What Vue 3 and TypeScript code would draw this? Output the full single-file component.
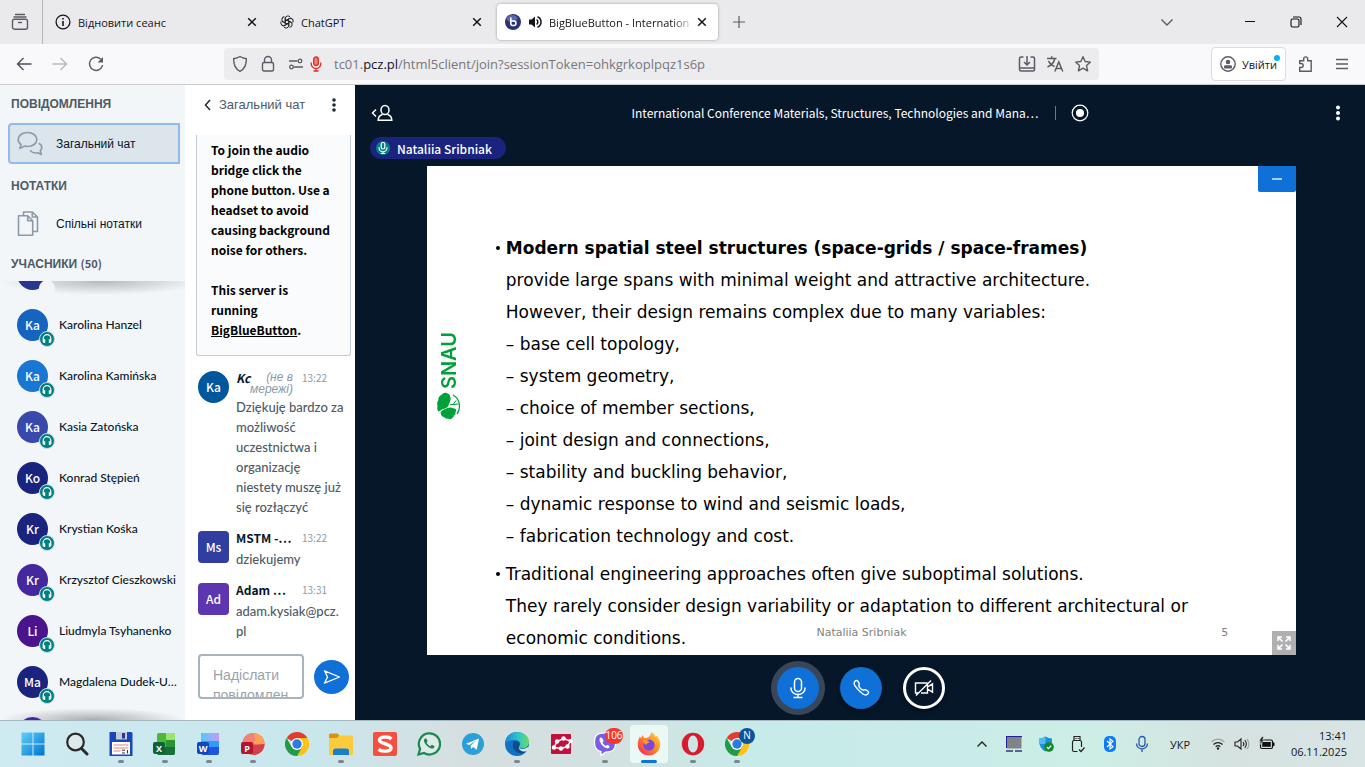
<script setup lang="ts">
interface Participant {
  initials: string
  name: string
  tone: string
}

const participants: Participant[] = [
  { initials: '', name: '', tone: 'navy' },
  { initials: 'Ka', name: 'Karolina Hanzel', tone: 'azure' },
  { initials: 'Ka', name: 'Karolina Kamińska', tone: 'sky' },
  { initials: 'Ka', name: 'Kasia Zatońska', tone: 'indigo' },
  { initials: 'Ko', name: 'Konrad Stępień', tone: 'deep' },
  { initials: 'Kr', name: 'Krystian Kośka', tone: 'deep' },
  { initials: 'Kr', name: 'Krzysztof Cieszkowski', tone: 'violet' },
  { initials: 'Li', name: 'Liudmyla Tsyhanenko', tone: 'purple' },
  { initials: 'Ma', name: 'Magdalena Dudek-U…', tone: 'deep' },
  { initials: '', name: '', tone: 'violet' },
]

const variables: string[] = [
  'base cell topology,',
  'system geometry,',
  'choice of member sections,',
  'joint design and connections,',
  'stability and buckling behavior,',
  'dynamic response to wind and seismic loads,',
  'fabrication technology and cost.',
]
</script>

<template>
  <div class="desktop">
    <header class="tabbar">
      <button class="icon-btn recent" aria-label="Recent">
        <svg width="18" height="18" viewBox="0 0 18 18" fill="none" stroke="#5b5b66" stroke-width="1.4"><path d="M4 1.5h10M2.5 4h13" /><rect x="1.5" y="6.2" width="15" height="10" rx="2" /><path d="M7 9.5h4" /></svg>
      </button>
      <div class="tab">
        <svg class="fav" width="16" height="16" viewBox="0 0 16 16" fill="none" stroke="#15141a" stroke-width="1.3"><circle cx="8" cy="8" r="6.9" /><path d="M8 7v5M8 4v1.4" stroke-width="1.6" /></svg>
        <span class="tab-title">Відновити сеанс</span>
        <button class="icon-btn close" aria-label="Close"><svg width="10" height="10" viewBox="0 0 10 10" stroke="#15141a" stroke-width="1.5"><path d="M1.2 1.2l7.6 7.6M8.8 1.2L1.2 8.8" /></svg></button>
      </div>
      <div class="tab">
        <svg class="fav" width="14" height="14" viewBox="0 0 24 24" fill="none" stroke="#222" stroke-width="1.7">
          <path v-for="a in [0, 60, 120, 180, 240, 300]" :key="a" :transform="`rotate(${a} 12 12)`" d="M9 13.7V6.200a4.600 4.600 0 0 1 8.600-2.300M9 10.200l6.300-3.700a4.600 4.600 0 0 1 2.300-.6" />
        </svg>
        <span class="tab-title">ChatGPT</span>
        <button class="icon-btn close" aria-label="Close"><svg width="10" height="10" viewBox="0 0 10 10" stroke="#15141a" stroke-width="1.5"><path d="M1.2 1.2l7.6 7.6M8.8 1.2L1.2 8.8" /></svg></button>
      </div>
      <div class="tab active">
        <svg class="fav" width="16" height="16" viewBox="0 0 16 16"><circle cx="8" cy="8" r="8" fill="#283274" /><ellipse cx="7" cy="4.5" rx="5.5" ry="3.6" fill="#5c68aa" /><path d="M5.8 3.5v6a2 2 0 0 0 2 2h1.1a2 2 0 0 0 2-2V9a2 2 0 0 0-2-2H6.5" fill="none" stroke="#fff" stroke-width="1.6" /></svg>
        <svg class="sound" width="14" height="14" viewBox="0 0 14 14" fill="#15141a"><path d="M1 4.5h2.5L7 1.5v11L3.500 9.500H1z" /><path d="M8.600 4.500a3.200 3.200 0 0 1 0 5M9.500 1.800a5.600 5.600 0 0 1 0 10.400" fill="none" stroke="#15141a" stroke-width="1.500" /></svg>
        <span class="tab-title fade">BigBlueButton - Internation</span>
        <button class="icon-btn close" aria-label="Close"><svg width="10" height="10" viewBox="0 0 10 10" stroke="#15141a" stroke-width="1.5"><path d="M1.2 1.2l7.6 7.6M8.8 1.2L1.2 8.8" /></svg></button>
      </div>
      <button class="icon-btn plus" aria-label="New tab"><svg width="12" height="12" viewBox="0 0 12 12" stroke="#5b5b66" stroke-width="1.2"><path d="M6 0v12M0 6h12" /></svg></button>
      <div class="grow"></div>
      <button class="icon-btn all-tabs" aria-label="All tabs"><svg width="14" height="14" viewBox="0 0 14 14" fill="none" stroke="#5b5b66" stroke-width="1.4"><path d="M1.500 4.500L7 10l5.500-5.500" /></svg></button>
      <button class="icon-btn win" aria-label="Minimise"><svg width="12" height="12" viewBox="0 0 12 12" stroke="#111"><path d="M1 5.500h10" /></svg></button>
      <button class="icon-btn win" aria-label="Restore"><svg width="12" height="12" viewBox="0 0 12 12" fill="none" stroke="#111" stroke-width="1.1"><rect x="1" y="3" width="8" height="8" rx="1.500" /><path d="M3 1h6a2 2 0 0 1 2 2v6" /></svg></button>
      <button class="icon-btn win" aria-label="Close window"><svg width="12" height="12" viewBox="0 0 12 12" stroke="#111" stroke-width="1.1"><path d="M1 1l10 10M11 1L1 11" /></svg></button>
    </header>

    <nav class="navbar">
      <button class="icon-btn nav" aria-label="Back"><svg width="16" height="16" viewBox="0 0 16 16" fill="none" stroke="#4f4f5a" stroke-width="1.400"><path d="M15.500 8H1.500M7.500 2L1.500 8l6 6" /></svg></button>
      <button class="icon-btn nav" aria-label="Forward"><svg width="16" height="16" viewBox="0 0 16 16" fill="none" stroke="#b9b9bf" stroke-width="1.400"><path d="M.5 8h14M8.500 2l6 6-6 6" /></svg></button>
      <button class="icon-btn nav" aria-label="Reload"><svg width="16" height="16" viewBox="0 0 16 16" fill="none" stroke="#5b5b66" stroke-width="1.400"><path d="M12.800 3.200A6.600 6.600 0 1 0 14.600 9" /><path d="M15 1v5.500H9.500z" fill="#5b5b66" stroke="none" /></svg></button>
      <div class="urlbar">
        <svg width="16" height="18" viewBox="0 0 16 18" fill="none" stroke="#5b5b66" stroke-width="1.400"><path d="M8 1.500c2 1.300 4 1.900 6.300 2.200C14.500 9.500 12.500 14 8 16.300 3.500 14 1.500 9.500 1.700 3.700 4 3.400 6 2.800 8 1.500z" /></svg>
        <svg class="lock" width="14" height="18" viewBox="0 0 14 18" fill="none" stroke="#5b5b66" stroke-width="1.400"><rect x="1.500" y="7.500" width="11" height="8.500" rx="1.500" /><path d="M3.500 7.500V5a3.500 3.500 0 0 1 7 0v2.500" /></svg>
        <svg class="perm" width="16" height="14" viewBox="0 0 16 14" fill="none" stroke="#5b5b66" stroke-width="1.300"><circle cx="12" cy="4" r="1.800" /><path d="M1 4h8.500M6 10h9" /><circle cx="3.500" cy="10" r="1.800" /></svg>
        <svg class="rec" width="12" height="16" viewBox="0 0 12 16" fill="none" stroke="#e22d20" stroke-width="1.300"><rect x="3.700" y="1" width="4.600" height="8.500" rx="2.300" fill="#f0807a" /><path d="M1.200 6.500v1.200a4.800 4.800 0 0 0 9.600 0V6.500M6 12.500V15M3.500 15h5" /></svg>
        <span class="url">tc01.<b>pcz.pl</b>/html5client/join?sessionToken=ohkgrkoplpqz1s6p</span>
        <button class="icon-btn tool" aria-label="Install"><svg width="18" height="18" viewBox="0 0 18 18" fill="none" stroke="#5b5b66" stroke-width="1.500"><path d="M5.500 2H3a1.500 1.500 0 0 0-1.500 1.500v11A1.500 1.500 0 0 0 3 16h12a1.500 1.500 0 0 0 1.500-1.500v-11A1.500 1.500 0 0 0 15 2h-2.500M1.500 13h15M9 1v8.500M6 7l3 3 3-3" /></svg></button>
        <button class="icon-btn tool" aria-label="Translate"><svg width="18" height="18" viewBox="0 0 18 18" fill="none" stroke="#5b5b66" stroke-width="1.500"><path d="M1 3.500h9.500M5.700 1.300v2.200M2.500 6c1 2.500 3.500 4.500 6 5.500M8.800 3.500C8 7.500 5 10.500 1.500 12M8.800 16.500L12.800 7l4 9.500M10.200 13.500h5.200" /></svg></button>
        <button class="icon-btn tool" aria-label="Bookmark"><svg width="18" height="18" viewBox="0 0 18 18" fill="none" stroke="#5b5b66" stroke-width="1.400" stroke-linejoin="round"><path d="M9 1.700l2.200 4.800 5.200.6-3.900 3.500 1.100 5.200L9 13.200l-4.600 2.600 1.100-5.200L1.600 7.100l5.200-.6z" /></svg></button>
      </div>
      <button class="signin">
        <svg width="16" height="16" viewBox="0 0 16 16"><circle cx="8" cy="8" r="7.200" fill="none" stroke="#5b5b66" stroke-width="1.400" /><circle cx="8" cy="6" r="2.300" fill="#5b5b66" /><rect x="3.800" y="9.300" width="8.400" height="3.200" rx="1.600" fill="#5b5b66" /></svg>
        <span>Увійти</span>
        <i class="dot"></i>
      </button>
      <button class="icon-btn ext" aria-label="Extensions"><svg width="16" height="18" viewBox="0 0 16 18" fill="none" stroke="#5b5b66" stroke-width="1.400"><path d="M1.700 16.300V12.500h1.500a2 2 0 0 0 0-4H1.700V5.700h4V3.900a2 2 0 0 1 4 0v1.800h3.500v10.600z" /></svg></button>
      <button class="icon-btn menu" aria-label="Menu"><svg width="12" height="12" viewBox="0 0 12 12" stroke="#5b5b66" stroke-width="1.300"><path d="M0 1.500h12M0 6h12M0 10.500h12" /></svg></button>
    </nav>

    <main class="app">
      <aside class="sidebar">
        <h2>ПОВІДОМЛЕННЯ</h2>
        <button class="side-item selected">
          <svg width="26" height="26" viewBox="0 0 26 26" fill="none" stroke="#8b9aa8" stroke-width="1.600" stroke-linejoin="round"><path d="M10.500 1.500c5.300 0 9.300 3 9.300 7s-4 7-9.300 7c-1 0-2-.1-2.900-.4L3 17.300l1-3.800c-1.700-1.200-2.800-3-2.800-5 0-4 4-7 9.300-7z" /><path d="M21.700 12.200c1.900.9 3.100 2.400 3.100 4.200 0 1.200-.6 2.300-1.500 3.200l1 3.900-3.300-1.800c-.7.200-1.400.3-2.200.3-2.500 0-4.700-1.200-5.500-3" /></svg>
          <span>Загальний чат</span>
        </button>
        <h2 class="notes">НОТАТКИ</h2>
        <button class="side-item note-item">
          <svg width="26" height="26" viewBox="0 0 26 26" fill="none" stroke="#8b9aa8" stroke-width="1.600" stroke-linejoin="round"><path d="M1.500 4.800h9.200l5 5v14.500H1.500zM10.700 4.800v5h5" /><path d="M6.500 4.500V1h8.800l5.200 5v14.500h-4.500M15.300 1v5h5.200" /></svg>
          <span>Спільні нотатки</span>
        </button>
        <h2 class="users-title">УЧАСНИКИ <span>(50)</span></h2>
        <div class="users">
          <ul>
            <li v-for="(p, i) in participants" :key="i">
              <span class="avatar" :class="p.tone">{{ p.initials }}
                <span class="phones" :class="{ blank: !p.name }"><svg v-if="p.name" width="16" height="16" viewBox="0 0 16 16" fill="none" stroke="#fff"><path d="M4.200 11V7.500a3.800 3.800 0 0 1 7.600 0V11" stroke-width="1.200" /><path d="M5.300 8.300v3.600M10.700 8.300v3.600" stroke-width="1.800" /></svg></span>
              </span>
              <span class="person">{{ p.name }}</span>
            </li>
          </ul>
        </div>
      </aside>

      <section class="chat">
        <header class="chat-head">
          <button class="icon-btn back" aria-label="Hide chat"><svg width="8" height="12" viewBox="0 0 8 12" fill="none" stroke="#1b2a3a" stroke-width="1.500"><path d="M6 1L1.500 6 6 11" /></svg></button>
          <h3>Загальний чат</h3>
          <button class="icon-btn dots" aria-label="Chat options"><svg width="6" height="14" viewBox="0 0 6 14" fill="#1b2a3a"><circle cx="3" cy="2" r="1.800" /><circle cx="3" cy="7" r="1.800" /><circle cx="3" cy="12" r="1.800" /></svg></button>
        </header>
        <div class="log">
          <div class="welcome">
            <p>To join the audio bridge click the phone button. Use a headset to avoid causing background noise for others.</p>
            <p>This server is running <a href="#">BigBlueButton</a>.</p>
          </div>
          <article class="msg">
            <span class="avatar ocean">Ka</span>
            <div class="msg-main">
              <div class="msg-head"><strong class="gone">Kc</strong><em>(не в мережі)</em><time>13:22</time></div>
              <p>Dziękuję bardzo za możliwość uczestnictwa i organizację niestety muszę już się rozłączyć</p>
            </div>
          </article>
          <article class="msg">
            <span class="avatar square royal">Ms</span>
            <div class="msg-main">
              <div class="msg-head"><strong>MSTM -…</strong><time>13:22</time></div>
              <p>dziekujemy</p>
            </div>
          </article>
          <article class="msg">
            <span class="avatar square plum">Ad</span>
            <div class="msg-main">
              <div class="msg-head"><strong>Adam …</strong><time>13:31</time></div>
              <p>adam.kysiak@pcz.<wbr>pl</p>
            </div>
          </article>
        </div>
        <form class="composer" @submit.prevent>
          <textarea aria-label="Повідомлення" placeholder="Надіслати повідомлення"></textarea>
          <button class="send" aria-label="Send"><svg width="18" height="16" viewBox="0 0 18 16" fill="none" stroke="#fff" stroke-width="1.300" stroke-linejoin="round"><path d="M1.500 1.800L16.500 8l-15 6.200L4.500 8z" /></svg></button>
        </form>
      </section>

      <section class="stage">
        <header class="stage-head">
          <button class="icon-btn toggle" aria-label="Toggle users"><svg width="22" height="18" viewBox="0 0 22 18" fill="none" stroke="#fff" stroke-width="1.500"><path d="M5 5.500L1.500 9 5 12.500" /><ellipse cx="14" cy="6" rx="4" ry="4.600" /><path d="M11.500 10.500c-2.700.8-4.300 2.500-4.300 5.700h13.600c0-3.200-1.600-4.900-4.300-5.700" /></svg></button>
          <div class="room">
            <h1>International Conference Materials, Structures, Technologies and Mana…</h1>
            <i class="sep"></i>
            <svg width="18" height="18" viewBox="0 0 18 18"><circle cx="9" cy="9" r="7.800" fill="none" stroke="#fff" stroke-width="1.200" /><circle cx="9" cy="9" r="4" fill="#fff" /></svg>
          </div>
          <button class="icon-btn options" aria-label="Options"><svg width="6" height="16" viewBox="0 0 6 16" fill="#fff"><circle cx="3" cy="2.500" r="2" /><circle cx="3" cy="8" r="2" /><circle cx="3" cy="13.500" r="2" /></svg></button>
        </header>
        <div class="talkers">
          <button class="talker">
            <svg width="14" height="14" viewBox="0 0 14 14" fill="none" stroke="#fff" stroke-width="1.200"><circle cx="7" cy="7" r="7" fill="#008081" stroke="none" /><rect x="5.200" y="1.500" width="3.600" height="6.500" rx="1.800" /><path d="M3 6.200v.6a4 4 0 0 0 8 0v-.6M7 10.500V12.500M4.800 12.500h4.400" /></svg>
            <span>Nataliia Sribniak</span>
          </button>
        </div>
        <div class="screen">
          <div class="slide">
            <div class="brand">
              <svg width="24" height="28" viewBox="0 0 24 28" fill="#00a13a"><path d="M11 14.500L9.500 15.800C7.500 17.300 5.500 16.500 4 18.200L1.500 19.500C-.3 17.500.3 15.500.6 14 -.3 12 .3 9.500 1.300 8.500 1 5.500 3 3.500 4.500 3 6 .8 8.500.2 10 1.200c2 .2 3.200 1.800 3.200 3.600 1 1.800.3 4.200-.7 6.200z" /><path d="M10.500 16l3.500-.5 4.800 1.500c.6 1.600.2 2.500-.4 3.200.6 1.800-.3 3-1.600 3.300.2 1.700-.8 2.300-1.800 2.500-.5 1.500-2.500 1.500-3.500.8C9 27 8 26 7.300 25.300 5 25 4 23 3.800 21.500c-.6-1 0-2 .9-2.300C6 17.300 8.500 17.500 10.500 16z" /><path d="M16 3c3.500 2 6.500 6 6.500 11.500 0 3-.8 5.500-2.500 7.500" fill="none" stroke="#00a13a" stroke-width="1.300" /><path d="M13 12.800l8.500-.8M16 12.500l3-4" fill="none" stroke="#00a13a" /></svg>
              <span>SNAU</span>
            </div>
            <ul class="points">
              <li>
                <strong>Modern spatial steel structures (space-grids / space-frames)</strong><br>
                provide large spans with minimal weight and attractive architecture.<br>
                However, their design remains complex due to many variables:<br>
                <template v-for="v in variables" :key="v">– {{ v }}<br></template>
              </li>
              <li>
                Traditional engineering approaches often give suboptimal solutions.<br>
                They rarely consider design variability or adaptation to different architectural or<br>
                economic conditions.
              </li>
            </ul>
            <span class="author">Nataliia Sribniak</span>
            <span class="page">5</span>
            <button class="shrink" aria-label="Minimise presentation"><svg width="10" height="2" viewBox="0 0 10 2"><path d="M0 1h10" stroke="#fff" stroke-width="1.300" /></svg></button>
            <button class="full" aria-label="Fullscreen"><svg width="16" height="16" viewBox="0 0 16 16" fill="none" stroke="#fff" stroke-width="1.600"><path d="M2 6V2h4M2 2l4.500 4.500M10 2h4v4M14 2L9.500 6.500M2 10v4h4M2 14l4.500-4.500M14 10v4h-4M14 14L9.500 9.500" /></svg></button>
          </div>
        </div>
        <footer class="actions">
          <button class="round mic" aria-label="Mute"><svg width="18" height="22" viewBox="0 0 18 22" fill="none" stroke="#fff" stroke-width="1.500"><rect x="5.500" y="1.500" width="7" height="13" rx="3.500" /><path d="M2 10.500v1a7 6 0 0 0 14 0v-1M9 17.500v2.800M4.500 20.500h9" /></svg></button>
          <button class="round" aria-label="Leave audio"><svg width="18" height="18" viewBox="0 0 18 18" fill="none" stroke="#fff" stroke-width="1.400" stroke-linejoin="round"><path d="M2.300 3.200C3.200 1.300 5 .9 6 2.300l1.200 2c.5 1-.6 1.800-.4 2.600.7 2.100 2.300 3.700 4.300 4.300.8.200 1.600-.9 2.600-.4l2 1.200c1.400 1 1 2.800-.9 3.700-1 .5-2.600.2-3.800-.7C7.500 12.400 4.800 9.600 3 6.900 2.200 5.700 1.900 4.200 2.300 3.200z" /></svg></button>
          <button class="round cam" aria-label="Share webcam"><svg width="20" height="18" viewBox="0 0 20 18" fill="none" stroke="#fff" stroke-width="1.400"><path d="M13.500 4H1.500v10H4M7 14h6.500V4.500M13.500 8l5-3.200v8.400l-5-3.200M2 16.500L17 1.500" /></svg></button>
        </footer>
      </section>
    </main>

    <footer class="taskbar">
      <div class="apps">
        <button aria-label="Start"><svg width="24" height="24" viewBox="0 0 24 24"><defs><linearGradient id="win" x1="0" y1="0" x2="1" y2="1"><stop offset="0" stop-color="#5fd0f8" /><stop offset="1" stop-color="#0072d0" /></linearGradient></defs><path d="M.5.5h11v11H.5zM12.500.5h11v11h-11zM.5 12.500h11v11H.5zM12.500 12.500h11v11h-11z" fill="url(#win)" /></svg></button>
        <button aria-label="Search"><svg width="24" height="24" viewBox="0 0 24 24" fill="none" stroke="#2b2b2b"><circle cx="10.500" cy="10" r="8.300" stroke-width="2.200" fill="#dfe9ec" /><path d="M16.500 16.500l5.500 5.500" stroke-width="3" stroke-linecap="round" /></svg></button>
        <button class="open" aria-label="Total Commander"><svg width="24" height="24" viewBox="0 0 24 24"><path d="M.5 0h22l1 1v23h-23z" fill="#1847b8" /><path d="M7 0h11v7.500H7z" fill="#c4cbd6" /><path d="M13 1h3v5.500h-3z" fill="#1d3b94" /><path d="M3 10h18v12.500H3z" fill="#fff" /><path d="M4.500 13h15M4.500 16h15M4.500 19h7" stroke="#e08484" stroke-width="1.200" /><path d="M13 18.200h3M13 21h3M18.500 18v3.500" stroke="#333" /></svg></button>
        <button class="open" aria-label="Excel"><svg width="24" height="24" viewBox="0 0 24 24"><rect x="4" y="1" width="18" height="22" rx="2" fill="#4eb83a" /><path d="M13 1h7a2 2 0 0 1 2 2v5h-9z" fill="#9be36d" /><path d="M13 8h9v7h-9z" fill="#2c9438" /><path d="M4 15h18v6a2 2 0 0 1-2 2H6a2 2 0 0 1-2-2z" fill="#17703a" /><rect y="10" width="12" height="12" rx="2" fill="#0e6238" /><text x="6" y="19.500" text-anchor="middle" class="glyph">X</text></svg></button>
        <button class="open" aria-label="Word"><svg width="24" height="24" viewBox="0 0 24 24"><defs><linearGradient id="wd"><stop offset="0" stop-color="#52c9fa" /><stop offset="1" stop-color="#c39bfa" /></linearGradient></defs><rect x="4" y="1" width="18" height="22" rx="2" fill="#1d54df" /><path d="M6 1h14a2 2 0 0 1 2 2v6H4V3a2 2 0 0 1 2-2z" fill="url(#wd)" /><path d="M4 9h18v6H4z" fill="#319af6" /><rect y="10" width="12" height="12" rx="2" fill="#1147bc" /><text x="6" y="19.500" text-anchor="middle" class="glyph">W</text></svg></button>
        <button class="open" aria-label="PowerPoint"><svg width="24" height="24" viewBox="0 0 24 24"><circle cx="12.500" cy="12" r="11" fill="#e8664a" /><path d="M12.500 1a11 11 0 0 1 11 11l-8 2-6-7z" fill="#ffa154" /><path d="M12.500 1C7 1 2.500 4 1.500 10l9 3 4-5z" fill="#f28277" /><path d="M11 13l12.500-1A11 11 0 0 1 12 23z" fill="#d43f50" /><rect y="10" width="12" height="12" rx="2" fill="#b3152c" /><text x="6" y="19.500" text-anchor="middle" class="glyph">P</text></svg></button>
        <button aria-label="Chrome"><svg width="24" height="24" viewBox="0 0 24 24"><path d="M12 12L1.600 6A12 12 0 0 1 22.400 6z" fill="#e33b2e" /><path d="M12 12V6h10.400A12 12 0 0 1 12 24z" fill="#fbc116" /><path d="M12 12l5.200 3L12 24A12 12 0 0 1 1.600 6l5.200 9z" fill="#229a48" /><circle cx="12" cy="12" r="6" fill="#fff" /><circle cx="12" cy="12" r="4.700" fill="#2c7be5" /></svg></button>
        <button class="open" aria-label="Explorer"><svg width="24" height="24" viewBox="0 0 24 24"><path d="M0 3a1.500 1.500 0 0 1 1.500-1.500h7L11 4v4H0z" fill="#d9940f" /><path d="M0 6h8l2-2.500h12A2 2 0 0 1 24 5.500V22a1 1 0 0 1-1 1H1a1 1 0 0 1-1-1z" fill="#fccb3c" /><path d="M4 23v-4a2.500 2.500 0 0 1 2.500-2.500h11A2.500 2.500 0 0 1 20 19v4z" fill="#1680cf" /></svg></button>
        <button aria-label="Snagit"><svg width="24" height="24" viewBox="0 0 24 24"><rect width="24" height="24" rx="2" fill="#f5503f" /><path d="M18.500 6.800C16 4.800 6.500 3.800 6.500 8c0 4.500 11.500 3 11.500 8 0 4.500-9.500 3.500-12.500 1.300" fill="none" stroke="#fff" stroke-width="3.400" /></svg></button>
        <button aria-label="WhatsApp"><svg width="24" height="24" viewBox="0 0 24 24"><path d="M1.500 22.500l1.600-5.600A10.600 10.600 0 1 1 7 21z" fill="#dfe9e8" stroke="#1b8754" stroke-width="2.200" /><path d="M8.500 6.300c-2 .8-2.200 3.400.4 6.400 2.800 3.300 6 4.700 7.800 3.200.8-.7.900-1.700.6-2l-2.500-1.200-1.400 1.500c-1.800-.7-3-1.900-3.800-3.600l1-1.200-1-2.700z" fill="#1b8754" /></svg></button>
        <button aria-label="Telegram"><svg width="24" height="24" viewBox="0 0 24 24"><circle cx="12" cy="12" r="11" fill="#2a9fd8" /><path d="M5 11.700l13-5.200-2.200 11.200-3.700-2.700-2 2-.5-3.600 6-5-7.500 4.500z" fill="#fff" /></svg></button>
        <button class="open" aria-label="Edge"><svg width="24" height="24" viewBox="0 0 24 24"><defs><linearGradient id="eg"><stop offset="0" stop-color="#1588d8" /><stop offset=".5" stop-color="#2cc0d2" /><stop offset="1" stop-color="#67df62" /></linearGradient></defs><circle cx="12" cy="12" r="12" fill="#1271c4" /><path d="M0 11.500C.5 4.500 5.500 0 12 0c7 0 12 4.500 12 10 0 4-3 6-6.500 6-2.500 0-4-.8-3.200-2 1.700-2.300.8-6-4-6C5.500 8 1 9.500 0 11.500z" fill="url(#eg)" /><path d="M9 9.500c-2.500 3-1 9.500 4.500 11.500 3.500 1.200 6.500 0 8.700-2.700C17 20 12.500 17 14.300 14c1.200-2-.8-5.500-5.300-4.500z" fill="#134b87" /><path d="M14.300 14c-.8 1.500 1 3.500 5 2.800 2-.4 3.500-1.400 4.300-2.500L24 18l-2 1c-5 2-9.500-2-7.700-5z" fill="#cfe4e6" /></svg></button>
        <button aria-label="Viewer"><svg width="24" height="24" viewBox="0 0 24 24"><rect x="2" y="2" width="20" height="20" rx="1" fill="#c3103a" /><path d="M5 15.500L8 9.500l6.500-3 7 2.500-3 5.500-6.500 2z" fill="none" stroke="#fff" stroke-width="1.500" /><g fill="#fff"><circle cx="5" cy="15.500" r="2.200" /><circle cx="8" cy="9.500" r="2.200" /><circle cx="14.500" cy="6.500" r="2.200" /><circle cx="21.500" cy="9" r="2" /><circle cx="18.500" cy="14.500" r="2.200" /><circle cx="12" cy="16.500" r="2.200" /></g></svg></button>
        <button class="open" aria-label="Viber"><svg width="24" height="24" viewBox="0 0 24 24"><path d="M12 .8c7 0 10.500 2 10.500 9.700S19 20 12.500 20L8 23.500v-4C3 18.500 1.500 15 1.500 10.500 1.500 2.800 5 .8 12 .8z" fill="#765ee8" stroke="#fff" stroke-width="1.200" /><path d="M7.500 5.500c-2 1.500-.7 5 1.700 7.800 2.500 2.800 6 4.200 7.300 2 .6-1-1.500-2.800-2.600-2.300l-1 1c-1.600-.7-2.800-2-3.400-3.700l1-1c.3-1.500-1.700-4.500-3-3.800z" fill="#fff" /></svg><span class="badge red">106</span></button>
        <button class="open current" aria-label="Firefox"><svg width="24" height="24" viewBox="0 0 24 24"><defs><linearGradient id="ff" x1="1" y1="0" x2="0" y2="1"><stop offset="0" stop-color="#ffe14d" /><stop offset=".45" stop-color="#ff8a26" /><stop offset="1" stop-color="#ed2464" /></linearGradient></defs><path d="M14.500 0c2.500 1.500 3.500 3.500 4 5l1-1.500c3 3.500 4 6 3.700 9.500C22.700 19 18 23.500 12 23.500S1 19 .8 13c-.2-3 .7-6 2.200-8.500L4 6.500 5.500 3l1.500 3c2.500 0 5-.5 6-2.500.7-1.200 1-2.300 1.500-3.500z" fill="url(#ff)" /><circle cx="12" cy="13" r="5.600" fill="#7749d8" /><path d="M6 8c3-1 5.500.5 6.500 2-1 1.500-3 1-3.500 3-1.500-1-2.500-3-3-5z" fill="#ff9b2f" /></svg></button>
        <button class="open" aria-label="Opera"><svg width="24" height="24" viewBox="0 0 24 24"><path fill-rule="evenodd" d="M12 .8a11.200 11.200 0 1 0 0 22.400A11.200 11.200 0 0 0 12 .8zm0 2.700c3 0 5 3.800 5 8.500s-2 8.500-5 8.500-5-3.800-5-8.500 2-8.500 5-8.500z" fill="#d81b2d" /></svg></button>
        <button class="open" aria-label="Chrome profile"><svg width="24" height="24" viewBox="0 0 24 24"><path d="M12 12L1.600 6A12 12 0 0 1 22.400 6z" fill="#e33b2e" /><path d="M12 12V6h10.400A12 12 0 0 1 12 24z" fill="#fbc116" /><path d="M12 12l5.200 3L12 24A12 12 0 0 1 1.600 6l5.200 9z" fill="#229a48" /><circle cx="12" cy="12" r="6" fill="#fff" /><circle cx="12" cy="12" r="4.700" fill="#2c7be5" /></svg><span class="badge blue">N</span></button>
      </div>
      <div class="tray">
        <button aria-label="Hidden icons"><svg width="12" height="8" viewBox="0 0 12 8" fill="none" stroke="#222" stroke-width="1.400"><path d="M1.500 6.500L6 2l4.500 4.500" /></svg></button>
        <button aria-label="Display"><svg width="16" height="16" viewBox="0 0 16 16"><path d="M.5 12V.5H16" fill="none" stroke="#20209a" stroke-width="1.500" /><path d="M1 1h14.500v11.500H1z" fill="#808487" /><path d="M0 15h7M9 15h7" stroke="#34347f" stroke-width="1.600" /></svg></button>
        <button aria-label="Security"><svg width="16" height="16" viewBox="0 0 16 16"><path d="M7.500.5c2 1.300 4.200 1.800 6.500 2C14.300 8.500 12.500 13 7.500 15.500 2.500 13 .7 8.500 1 2.500c2.300-.2 4.500-.7 6.500-2z" fill="#1e8fdc" /><path d="M7.500.5v7.500H1C.9 6.200.9 4.500 1 2.500c2.300-.2 4.500-.7 6.500-2z" fill="#52bdf0" /><circle cx="11" cy="11" r="4.800" fill="#108a22" /><path d="M8.800 11l1.600 1.600 2.800-3" fill="none" stroke="#fff" stroke-width="1.300" /></svg></button>
        <button aria-label="USB"><svg width="14" height="18" viewBox="0 0 14 18" fill="none" stroke="#222" stroke-width="1.200"><path d="M3 5.500V1.500h6v4M1.500 14V7a1.500 1.500 0 0 1 1.500-1.500h6A1.500 1.500 0 0 1 10.500 7v5M6.500 16.500H3A1.500 1.500 0 0 1 1.500 15v-1M5 3v1M7.200 3v1M8 14.500l2 2 3.500-4" /></svg></button>
        <button aria-label="Bluetooth"><svg width="14" height="18" viewBox="0 0 14 18"><rect x="1" y="1" width="12" height="16" rx="5" fill="#0a7cf5" /><path d="M4 6l6 5.800L7 14V4l3 2.200L4 12" fill="none" stroke="#fff" stroke-width="1.200" /></svg></button>
        <button aria-label="Microphone"><svg width="14" height="18" viewBox="0 0 14 18" fill="none" stroke="#2a5ba8" stroke-width="1.300"><rect x="4" y="1.500" width="6" height="10" rx="3" /><path d="M1.500 8.500a5.500 5.500 0 0 0 11 0M7 14v3" /></svg></button>
        <span class="lang">УКР</span>
        <button class="quick" aria-label="Network, volume and battery">
          <svg width="16" height="16" viewBox="0 0 16 16" fill="none" stroke="#9aa6a8" stroke-width="1.200"><path d="M1.500 6a9 9 0 0 1 13 0" /><path d="M3.500 8.500a6.300 6.300 0 0 1 9 0M5.700 10.700a3.400 3.400 0 0 1 4.600 0" stroke="#222" /><circle cx="8" cy="12.500" r="1.200" fill="#222" stroke="none" /></svg>
          <svg width="16" height="16" viewBox="0 0 16 16" fill="none" stroke="#222" stroke-width="1.100"><path d="M1 6h2.500L7 3v10L3.500 10H1zM9 6a3 3 0 0 1 0 4M10.800 4.200a5.500 5.500 0 0 1 0 7.600" /><path d="M12.800 2.800a7.500 7.500 0 0 1 0 10.400" stroke="#9aa6a8" /></svg>
          <svg width="18" height="16" viewBox="0 0 18 16"><rect x="2.500" y="4" width="12" height="8.500" rx="1.500" fill="none" stroke="#111" stroke-width="1.200" /><rect x="4.200" y="6" width="8.600" height="4.800" fill="#111" /><path d="M15 6.500h1.500v3.500H15z" fill="#111" /><path d="M3.800.8L1 5h2.200l-1 3.500L6.300 4H4.500l1.300-3.200z" fill="#111" stroke="#d4e5e3" stroke-width=".6" /></svg>
        </button>
        <div class="clock"><time>13:41</time><time>06.11.2025</time></div>
      </div>
    </footer>
  </div>
</template>

<style>
body { margin: 0; }
</style>

<style scoped>
* { box-sizing: border-box; }
.desktop {
  --ui: "Open Sans", "Noto Sans", sans-serif;
  --latin: "Noto Sans CJK SC", "Noto Sans", sans-serif;
  display: flex;
  flex-direction: column;
  height: 100vh;
  overflow: hidden;
  font-family: var(--ui);
  font-size: 11px;
  color: #15141a;
}
button { font: inherit; color: inherit; border: 0; padding: 0; background: none; }
svg { display: block; flex: none; }
h1, h2, h3, p, ul { margin: 0; padding: 0; }
ul { list-style: none; }
.grow { flex: 1; }
.icon-btn { display: flex; align-items: center; justify-content: center; flex: none; }

.tabbar { display: flex; align-items: center; height: 44px; background: #eaeaed; flex: none; }
.recent { width: 43px; height: 44px; padding-right: 3px; border-right: 1px solid #b4b4b9; margin-right: 4px; }
.tab { display: flex; align-items: center; width: 221px; height: 36px; padding: 0 8px; margin-right: 4px; border-radius: 4px; }
.tab.active { background: #fff; box-shadow: 0 0 3px rgba(0, 0, 0, .35); }
.fav { margin-right: 7px; }
.sound { margin-right: 7px; }
.tab-title { flex: 1; overflow: hidden; white-space: nowrap; }
.fade { mask-image: linear-gradient(to right, #000 85%, transparent); }
.close { width: 16px; height: 24px; }
.plus { width: 34px; height: 32px; }
.all-tabs { width: 32px; margin-right: 44px; }
.win { width: 46px; height: 44px; }

.navbar { display: flex; align-items: center; height: 41px; padding: 0 15px 0 6px; background: #f9f9fb; border-bottom: 1px solid #cccccf; flex: none; }
.nav { width: 36px; height: 32px; }
.urlbar { display: flex; align-items: center; flex: 1; height: 32px; margin: 0 112px 0 110px; padding: 0 2px 0 8px; border-radius: 4px; background: #ececef; }
.lock { margin-left: 13px; }
.perm { margin-left: 13px; }
.rec { margin-left: 6px; margin-right: 12px; }
.url { flex: 1; font-size: 13px; color: #77777d; white-space: nowrap; overflow: hidden; }
.url b { font-weight: 400; color: #15141a; }
.tool { width: 28px; height: 28px; }
.signin { position: relative; display: flex; align-items: center; justify-content: center; gap: 6px; width: 75px; height: 34px; border: 1px solid #dcdce0; border-radius: 4px; background: #fff; }
.dot { position: absolute; right: 5px; top: 7px; width: 6px; height: 6px; border-radius: 50%; background: #00b3f4; }
.ext { width: 40px; height: 32px; }
.menu { width: 32px; height: 32px; margin-right: -8px; }

.app { display: flex; flex: 1; min-height: 0; }
.sidebar { display: flex; flex-direction: column; width: 185px; flex: none; background: #f3f6f9; font-family: "Liberation Sans", sans-serif; }
.sidebar h2 { padding: 11px 0 0 11px; font-size: 12px; line-height: 16px; font-weight: 700; color: #4e5a66; }
.side-item { display: flex; align-items: center; gap: 13px; height: 41px; margin: 11px 5px 0 8px; padding: 0 7px; border: 2px solid transparent; border-radius: 4px 0 0 4px; font-size: 12px; color: #06172a; }
.side-item.selected { background: #dce4ec; border-color: #8fbcec; }
.side-item.note-item { margin-top: 9px; }
.sidebar .notes { padding-top: 14px; }
.sidebar .users-title { padding-top: 11px; }
.users-title span { font-family: var(--latin); font-size: 11px; }
.users { flex: 1; min-height: 0; margin-top: 9px; overflow: hidden; background: radial-gradient(farthest-side at 55% 0, rgba(0, 0, 0, .25), transparent) 0 0 / 100% 14px no-repeat, radial-gradient(farthest-side at 50% 100%, rgba(0, 0, 0, .3), transparent) 0 100% / 100% 12px no-repeat; font-family: var(--latin); }
.users ul { margin-top: -33px; }
.users li { display: flex; align-items: center; gap: 11px; height: 51px; padding-left: 17px; }
.person { font-family: Lato, sans-serif; font-size: 12px; font-weight: 500; color: #06172a; white-space: nowrap; }
.avatar { position: relative; display: flex; align-items: center; justify-content: center; width: 31px; height: 32px; flex: none; border-radius: 50%; color: #fff; font-family: var(--latin); font-size: 12px; font-weight: 500; }
.phones { position: absolute; right: -7px; bottom: -6px; width: 16px; height: 16px; border-radius: 50%; background: #008081; border: 1px solid #c7dfe2; display: flex; align-items: center; justify-content: center; }
.phones.blank { background: #f3f6f9; border-color: #f3f6f9; }
.square { border-radius: 4px; }
.navy { background: #283593; }
.azure { background: #1565c0; }
.sky { background: #1976d2; }
.indigo { background: #3949ab; }
.deep { background: #1a237e; }
.violet { background: #4527a0; }
.purple { background: #4a148c; }
.ocean { background: #01579b; }
.royal { background: #303f9f; }
.plum { background: #5e35b1; }

.chat { display: flex; flex-direction: column; width: 170px; flex: none; background: #fff; font-family: var(--latin); }
.chat-head { display: flex; align-items: center; height: 40px; padding: 0 18px 0 19px; flex: none; }
.chat-head h3 { flex: 1; margin-left: 7px; font: 400 13px/16px "Liberation Sans", sans-serif; color: #4e5a66; }
.log { flex: 1; min-height: 0; margin-top: 10px; padding: 0 4px 0 11px; overflow: hidden; font-size: 13px; line-height: 20px; }
.welcome { margin-bottom: 13px; padding: 5px 15px 15px 14px; border: 1px solid #c3ccd4; border-top: 0; border-radius: 0 0 3px 3px; background: #fafbfc; font-size: 12px; font-weight: 700; color: #000; }
.welcome p + p { margin-top: 20px; }
.welcome a { color: inherit; }
.msg { display: flex; gap: 7px; margin: 0 0 12px 2px; }
.msg .avatar { margin-top: 2px; }
.msg-main { flex: 1; min-width: 0; }
.msg-head { display: flex; align-items: flex-start; }
.msg-head strong { width: 57px; font-size: 12px; font-weight: 700; line-height: 18px; color: #06172a; white-space: nowrap; }
.msg-head strong.gone { width: 14px; font-style: italic; }
.msg-head em { width: 43px; padding-top: 2px; font: italic 12px/12px "Liberation Sans", sans-serif; text-align: right; color: #8b9aa8; }
.msg-head time { margin-left: 9px; font-size: 10px; line-height: 18px; color: #8b9aa8; }
.msg-main p { margin-top: 2px; padding-right: 5px; font-family: Lato, sans-serif; color: #4e5a66; font-weight: 500; }
.composer { display: flex; align-items: center; gap: 10px; padding: 0 6px 21px 13px; flex: none; }
.composer textarea { flex: 1; min-width: 0; height: 45px; padding: 9px 12px 0 13px; border: 2px solid #a7b3bd; border-radius: 4px; resize: none; overflow: hidden; outline: 0; font: 14px/20px "Liberation Sans", sans-serif; }
.composer textarea::placeholder { color: #9aa3ab; }
.send { display: flex; align-items: center; justify-content: center; width: 35px; height: 34px; border-radius: 50%; background: #0f70d7; }

.stage { display: flex; flex-direction: column; flex: 1; min-width: 0; background: #06172a; color: #fff; font-family: var(--latin); }
.stage-head { display: grid; grid-template-columns: 1fr auto 1fr; align-items: center; height: 52px; padding: 4px 16px 0; flex: none; }
.toggle { justify-self: start; }
.options { justify-self: end; width: 22px; }
.room { display: flex; align-items: center; }
.room h1 { font-size: 12px; line-height: 20px; font-weight: 400; white-space: nowrap; }
.sep { width: 1px; height: 14px; margin: 0 15px 0 16px; background: #6d7987; }
.talkers { height: 29px; padding-left: 15px; flex: none; }
.talker { display: flex; align-items: center; gap: 7px; height: 22px; padding: 0 14px 0 6px; border-radius: 11px; background: #1a237e; font-size: 12px; font-weight: 500; }
.screen { flex: 1; min-height: 0; display: flex; justify-content: center; padding-left: 3px; }
.slide { position: relative; display: flex; align-items: flex-start; height: 100%; aspect-ratio: 16 / 9; background: #fff; color: #000; font-family: "DejaVu Sans", sans-serif; }
.brand { display: flex; flex-direction: column-reverse; align-items: center; gap: 3px; width: 24px; margin: 166px 0 0 10px; }
.brand span { writing-mode: vertical-rl; transform: rotate(180deg); font: 600 20px/24px Inter, sans-serif; color: #00a13a; }
.points { margin: 66px 0 0 34px; font-size: 17px; line-height: 32px; white-space: nowrap; }
.points li { position: relative; padding-left: 11px; }
.points li + li { margin-top: 6px; }
.points li::before { content: ""; position: absolute; left: 1px; top: 14px; width: 4px; height: 4px; border-radius: 50%; background: #000; }
.author, .page { position: absolute; bottom: 14px; font-size: 11px; line-height: 16px; color: #7f7f7f; }
.author { left: 0; right: 0; text-align: center; }
.page { right: 68px; }
.shrink, .full { position: absolute; right: 0; display: flex; align-items: center; justify-content: center; }
.shrink { top: 0; width: 38px; height: 26px; background: #0f70d7; border-radius: 0 0 2px 2px; }
.full { bottom: 0; width: 24px; height: 24px; background: #b0b0b0; }
.actions { display: flex; align-items: center; justify-content: center; gap: 21px; height: 65px; padding-left: 1px; flex: none; }
.round { display: flex; align-items: center; justify-content: center; width: 42px; height: 42px; border-radius: 50%; background: #0f70d7; box-shadow: 0 2px 4px rgba(0, 0, 0, .5); }
.round.mic { box-shadow: 0 0 0 6px #3a4657; }
.round.cam { background: transparent; border: 3px solid #fff; }

.taskbar { display: flex; align-items: stretch; justify-content: space-between; height: 47px; flex: none; padding: 0 18px 0 11px; border-top: 1px solid #a5b8bf; background: linear-gradient(90deg, #cfeaf1 0%, #c8e7ec 22%, #d6dfe0 34%, #d3e0e0 44%, #c7ebe8 55%, #c9ece9 70%, #cdeee5 80%, #d6e2e0 90%, #d8e5e4 100%); }
.apps { display: flex; }
.apps button { position: relative; display: flex; align-items: center; justify-content: center; width: 44px; }
.open::after { content: ""; position: absolute; bottom: 4px; left: 19px; width: 6px; height: 3px; border-radius: 2px; background: #7c8789; }
.apps .current::before { content: ""; position: absolute; inset: 4px 3px 4px 3px; border-radius: 4px; background: #eaf8f6; }
.apps .current svg { position: relative; }
.current::after { left: 14px; width: 16px; background: #0a76d6; }
.glyph { font: 700 9px "Open Sans", sans-serif; fill: #fff; }
.badge { position: absolute; top: 7px; left: 22px; height: 16px; line-height: 15px; border-radius: 8px; color: #fff; font-size: 10px; text-align: center; }
.red { width: 18px; background: #f5372c; }
.blue { width: 16px; background: #0d559b; left: 24px; }
.tray { display: flex; align-items: center; }
.tray > button { display: flex; align-items: center; justify-content: center; width: 32px; height: 32px; }
.lang { width: 44px; text-align: center; font-size: 11px; }
.tray > .quick { width: 66px; justify-content: flex-start; gap: 8px; padding-left: 8px; }
.clock { display: flex; flex-direction: column; align-items: flex-end; justify-content: center; width: 79px; font-size: 11px; line-height: 16px; }
</style>
